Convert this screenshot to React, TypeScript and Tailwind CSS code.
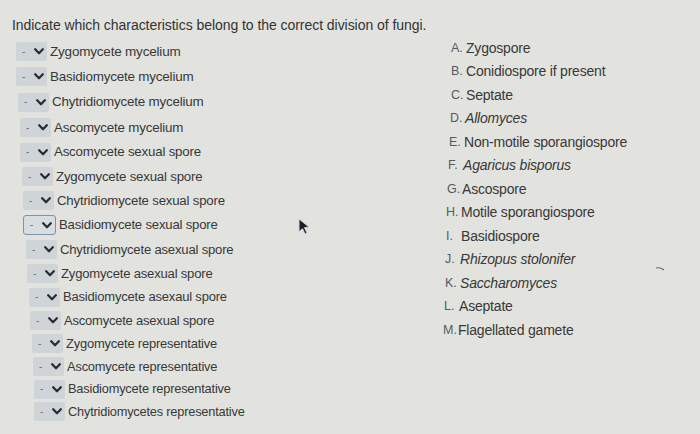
import React from "react";

const rows: { label: string; ml: number; h: number; focus?: boolean }[] = [
  { label: "Zygomycete mycelium", ml: 16, h: 25 },
  { label: "Basidiomycete mycelium", ml: 16, h: 25.5 },
  { label: "Chytridiomycete mycelium", ml: 18, h: 25.5 },
  { label: "Ascomycete mycelium", ml: 20, h: 25 },
  { label: "Ascomycete sexual spore", ml: 20, h: 24.5 },
  { label: "Zygomycete sexual spore", ml: 22, h: 24 },
  { label: "Chytridiomycete sexual spore", ml: 23, h: 24.5 },
  { label: "Basidiomycete sexual spore", ml: 23, h: 24.5, focus: true },
  { label: "Chytridiomycete asexual spore", ml: 26, h: 24 },
  { label: "Zygomycete asexual spore", ml: 27, h: 24 },
  { label: "Basidiomycete asexaul spore", ml: 29, h: 23.5 },
  { label: "Ascomycete asexual spore", ml: 30, h: 23 },
  { label: "Zygomycete representative", ml: 32, h: 23 },
  { label: "Ascomycete representative", ml: 33, h: 23 },
  { label: "Basidiomycete representative", ml: 34, h: 22.5 },
  { label: "Chytridiomycetes representative", ml: 34, h: 22 },
];

const answers: { l: string; t: string; it?: boolean; ml: number }[] = [
  { l: "A.", t: "Zygospore", ml: 451 },
  { l: "B.", t: "Conidiospore if present", ml: 451 },
  { l: "C.", t: "Septate", ml: 451 },
  { l: "D.", t: "Allomyces", it: true, ml: 450 },
  { l: "E.", t: "Non-motile sporangiospore", ml: 449 },
  { l: "F.", t: "Agaricus bisporus", it: true, ml: 448 },
  { l: "G.", t: "Ascospore", ml: 447 },
  { l: "H.", t: "Motile sporangiospore", ml: 446 },
  { l: "I.", t: "Basidiospore", ml: 446 },
  { l: "J.", t: "Rhizopus stolonifer", it: true, ml: 445 },
  { l: "K.", t: "Saccharomyces", it: true, ml: 445 },
  { l: "L.", t: "Aseptate", ml: 444 },
  { l: "M.", t: "Flagellated gamete", ml: 443 },
];

function Chevron() {
  return (
    <svg width="10" height="7" viewBox="0 0 10 7" className="shrink-0">
      <path d="M1.2 1.3 L5 5.2 L8.8 1.3" fill="none" stroke="#2a2d33" strokeWidth="2.3" strokeLinecap="round" strokeLinejoin="round" />
    </svg>
  );
}

export default function App() {
  return (
    <div
      className="relative w-[700px] h-[434px] overflow-hidden bg-[#e2e3de] text-[#363636]"
      style={{ fontFamily: '"Liberation Sans", Arial, sans-serif' }}
    >
      <p className="pl-[12px] pt-[17px] text-[14px] leading-[16px] tracking-[-0.05px] text-[#333333]">
        Indicate which characteristics belong to the correct division of fungi.
      </p>
      <div className="flex items-start">
        <div className="w-[440px] shrink-0 pt-[6px] flex flex-col">
          {rows.map((r, i) => (
            <div key={i} className="flex items-center" style={{ height: r.h, marginLeft: r.ml }}>
              <div
                className={
                  r.focus
                    ? "flex items-center justify-between w-[33px] h-[20px] pl-[6px] pr-[3px] rounded-[3px] border border-[#7d93ad] bg-[#d8dde2]"
                    : "flex items-center justify-between w-[31px] h-[19px] pl-[6px] pr-[3px] rounded-[2px] bg-[#cfd4d8]"
                }
              >
                <span className="text-[10px] leading-none text-[#6b6f74]">-</span>
                <Chevron />
              </div>
              <span
                className="ml-[3px] leading-[16px] tracking-[-0.2px] text-[#383838] whitespace-nowrap"
                style={{ fontSize: 13.5 - (0.7 * i) / 15 }}
              >
                {r.label}
              </span>
            </div>
          ))}
        </div>
        <div className="pt-[3px] flex flex-col -ml-[440px]">
          {answers.map((a, i) => (
            <div key={i} className="flex items-center h-[23.5px] whitespace-nowrap" style={{ marginLeft: a.ml }}>
              <span className="w-[15px] text-[12.5px] leading-[16px] text-[#555a60]">{a.l}</span>
              <span className={(a.it ? "italic " : "") + "text-[14px] leading-[16px] tracking-[-0.2px] text-[#383838]"}>{a.t}</span>
            </div>
          ))}
        </div>
      </div>
      <svg className="absolute left-[297px] top-[218px]" width="14" height="18" viewBox="0 0 14 18">
        <path d="M2 1 L12 9 L7.5 9.6 L10 15 L8 16 L5.6 10.8 L2 13.5 Z" fill="#1d1f24" stroke="#c9d3dc" strokeWidth="1" />
      </svg>
      <svg className="absolute left-[655px] top-[266px]" width="10" height="6" viewBox="0 0 10 6">
        <path d="M1 2 Q5 1 9 4" fill="none" stroke="#6b6b6b" strokeWidth="1.2" />
      </svg>
    </div>
  );
}
